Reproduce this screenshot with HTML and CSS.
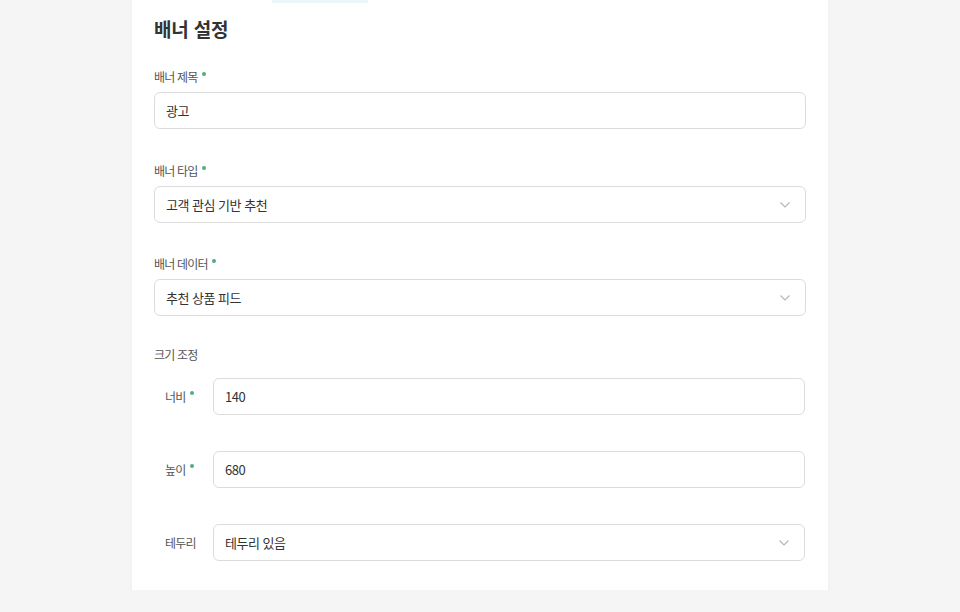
FILE: index.html
```html
<!DOCTYPE html>
<html lang="ko">
<head>
    <meta charset="UTF-8">
    <meta name="viewport" content="width=device-width, initial-scale=1.0">
    <title>배너 설정</title>
    <link rel="stylesheet" href="styles.css">
</head>
<body>
<div class="card">
    <span class="tab-mark"></span>
    <h2 class="title">배너 설정</h2>

    <div class="field">
        <label class="label">배너 제목<span class="req"></span></label>
        <div class="control">광고</div>
    </div>

    <div class="field">
        <label class="label">배너 타입<span class="req"></span></label>
        <div class="control select">고객 관심 기반 추천
            <svg class="chev" width="10" height="6" viewBox="0 0 10 6"><path d="M0.5 0.5 L5 5 L9.5 0.5" fill="none" stroke="#b5b5b5" stroke-width="1.1"/></svg>
        </div>
    </div>

    <div class="field">
        <label class="label">배너 데이터<span class="req"></span></label>
        <div class="control select">추천 상품 피드
            <svg class="chev" width="10" height="6" viewBox="0 0 10 6"><path d="M0.5 0.5 L5 5 L9.5 0.5" fill="none" stroke="#b5b5b5" stroke-width="1.1"/></svg>
        </div>
    </div>

    <div class="group">
        <div class="label">크기 조정</div>
        <div class="row">
            <label class="row-label">너비<span class="req"></span></label>
            <div class="control">140</div>
        </div>
        <div class="row">
            <label class="row-label">높이<span class="req"></span></label>
            <div class="control">680</div>
        </div>
        <div class="row">
            <label class="row-label">테두리</label>
            <div class="control select">테두리 있음
                <svg class="chev" width="10" height="6" viewBox="0 0 10 6"><path d="M0.5 0.5 L5 5 L9.5 0.5" fill="none" stroke="#b5b5b5" stroke-width="1.1"/></svg>
            </div>
        </div>
    </div>
</div>
</body>
</html>
```

FILE: styles.css
```css
body {
    font-family: "Noto Sans CJK KR", "Noto Sans", sans-serif;
    background-color: #f5f5f5;
    margin: 0;
    padding: 0;
    color: #333;
}

.card {
    position: relative;
    width: 696px;
    margin: 0 auto;
    box-sizing: border-box;
    background-color: #fff;
    padding: 15px 22px 29px;
    box-shadow: 0 1px 2px rgba(0, 0, 0, 0.06);
}

.tab-mark {
    position: absolute;
    top: 0;
    left: 140px;
    width: 96px;
    height: 3px;
    background-color: #e9f7fa;
}

.title {
    margin: 0 0 25px;
    font-size: 19px;
    line-height: 28px;
    font-weight: 700;
    letter-spacing: -0.2px;
    color: #333;
}

.field {
    margin-bottom: 33px;
}

.field:nth-of-type(2) {
    margin-bottom: 32px;
}

.field:nth-of-type(3) {
    margin-bottom: 30px;
}

.label {
    display: block;
    height: 18px;
    font-size: 12px;
    line-height: 18px;
    letter-spacing: -0.8px;
    color: #555;
    margin-bottom: 6px;
}

.req {
    position: relative;
    top: -5px;
    display: inline-block;
    width: 4px;
    height: 4px;
    border-radius: 50%;
    background-color: #52ad80;
    margin-left: 4.5px;
    vertical-align: middle;
}

.control {
    display: flex;
    align-items: center;
    height: 37px;
    box-sizing: border-box;
    padding: 0 11px;
    border: 1px solid #dcdcdc;
    border-radius: 6px;
    font-size: 13px;
    letter-spacing: -0.5px;
    color: #333;
    background-color: #fff;
}

.select {
    justify-content: space-between;
    padding-right: 15px;
}

.group .label {
    margin-bottom: 14px;
}

.row {
    display: flex;
    align-items: center;
    padding-left: 11px;
    padding-right: 1px;
    margin-bottom: 36px;
}

.row:last-child {
    margin-bottom: 0;
}

.row-label {
    width: 48px;
    flex-shrink: 0;
    font-size: 12px;
    line-height: 18px;
    letter-spacing: -0.8px;
    color: #555;
}

.row .control {
    flex: 1;
}
```
